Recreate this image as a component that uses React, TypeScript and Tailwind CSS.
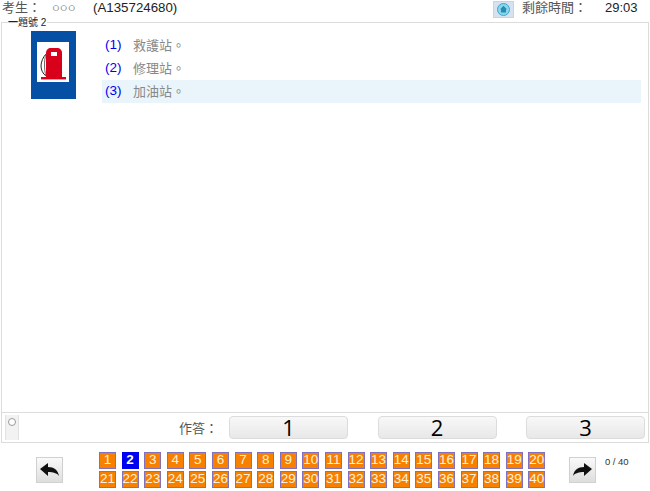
const options = [
  { no: "(1)", text: "救護站。" },
  { no: "(2)", text: "修理站。" },
  { no: "(3)", text: "加油站。" },
];

const cjk = "font-['Liberation_Sans','Noto_Sans_CJK_TC',sans-serif]";

function PumpSign() {
  return (
    <svg width="45" height="68" viewBox="0 0 45 68" className="block">
      <rect width="45" height="68" fill="#0550a5" />
      <rect x="6" y="11" width="32" height="40" fill="#fff" />
      <path d="M15 46V22c0-3 2-5 5-5h6c3 0 5 2 5 5v24z" fill="#d9001b" />
      <rect x="20" y="21" width="6" height="4" fill="#fff" />
      <rect x="10" y="46" width="25" height="2.4" fill="#d9001b" />
      <path d="M15 23c-3 3-5 8-5 12s2 8 5 10" fill="none" stroke="#222" strokeWidth="1" />
      <path d="M15 23c-2 6-2 16 0 22" fill="none" stroke="#666" strokeWidth="1" />
    </svg>
  );
}

function HomeButton() {
  return (
    <div className="w-[21px] h-[17px] mt-[1px] border border-[#c6d4e6] bg-[#d6e2f0] flex items-center justify-center">
      <svg width="13" height="13" viewBox="0 0 13 13">
        <circle cx="6.5" cy="6.5" r="6" fill="#8fd4ea" stroke="#3fa6c8" />
        <path d="M6.5 2.8 10 6.2H9v3.4H4V6.2H3z" fill="#1f8fb5" />
      </svg>
    </div>
  );
}

function ArrowButton({ flip }: { flip?: boolean }) {
  return (
    <div className="w-[27px] h-[26px] border border-[#d0d0d0] bg-gradient-to-b from-[#fafafa] to-[#dedede] flex items-center justify-center">
      <svg width="20" height="14" viewBox="0 0 20 14" className={flip ? "-scale-x-100" : ""}>
        <path d="M0 6 8 0v4c6 0 10 3 11 9-2-3-6-4-11-4v4z" fill="#111" />
      </svg>
    </div>
  );
}

function AnswerButton({ label }: { label: string }) {
  return (
    <div className="w-[119px] h-[23px] rounded-sm border border-[#dcdcdc] bg-gradient-to-b from-[#f8f8f8] to-[#e8e8e8] flex items-center justify-center text-[22px] text-black font-['Open_Sans',sans-serif]">
      {label}
    </div>
  );
}

export default function App() {
  const numbers = Array.from({ length: 40 }, (_, i) => i + 1);

  return (
    <div className={`w-[650px] h-[491px] bg-white overflow-hidden ${cjk}`}>
      {/* 考生資料 */}
      <div className="h-[22px] flex items-start text-[13px] leading-[15px] text-[#333]">
        <span className="w-[93px] flex pl-[2px] text-[#555]">
          <span className="w-[50px]">考生：</span>
          <span>○○○</span>
        </span>
        <span className="text-[13.3px] text-[#222]">(A135724680)</span>
        <div className="ml-auto flex items-start">
          <HomeButton />
          <span className="ml-[8px] w-[83px] text-[#555]">剩餘時間：</span>
          <span className="w-[45px] text-[#222]">29:03</span>
        </div>
      </div>

      {/* 題目區 */}
      <div className="relative mx-[1px] h-[421px] border border-[#dcdcdc] flex flex-col">
        <div className="absolute left-[6px] -top-[6px] bg-white pr-[1px] text-[10px] leading-[12px] text-[#222]">
          <span className="font-bold">一</span>題號 2
        </div>
        <div className="flex-1 flex pt-[8px] pl-[29px]">
          <PumpSign />
          <div className="ml-[26px] mr-[7px] flex-1 pt-[3px]">
            {options.map((o, i) => (
              <div
                key={o.no}
                className={`h-[23px] flex items-center pl-[3px] text-[13px] ${i === 2 ? "bg-[#e9f5fb]" : ""}`}
              >
                <span className="w-[28px] text-[13.5px] text-[#0000f0]">{o.no}</span>
                <span className="text-[#888]">{o.text}</span>
              </div>
            ))}
          </div>
        </div>
        <div className="h-[30px] border-t border-[#dcdcdc] flex items-center">
          <div className="ml-[3px] w-[14px] h-[25px] bg-[#f2f2f2] border-x border-[#e2e2e2] flex justify-center pt-[3px]">
            <div className="w-[8px] h-[8px] rounded-full border border-[#999] bg-white" />
          </div>
          <span className="ml-[160px] w-[50px] mt-[2px] text-[13px] text-[#555]">作答：</span>
          <div className="flex gap-[29.5px]">
            <AnswerButton label="1" />
            <AnswerButton label="2" />
            <AnswerButton label="3" />
          </div>
        </div>
      </div>

      {/* 題號列 */}
      <div className="flex items-start pt-[9px]">
        <div className="ml-[36px] mt-[5px]">
          <ArrowButton />
        </div>
        <div className="ml-[36px] grid grid-cols-[repeat(20,17px)] gap-x-[5.6px] gap-y-[2px]">
          {numbers.map((n) => (
            <div
              key={n}
              className={`h-[17px] flex items-center justify-center text-[13.5px] ${
                n === 2
                  ? "bg-[#0000f0] text-white font-bold"
                  : "bg-[#f78000] border border-[#8070c0] text-[#fff0dc]"
              }`}
            >
              {n}
            </div>
          ))}
        </div>
        <div className="ml-[23.6px] mt-[5px]">
          <ArrowButton flip />
        </div>
        <span className="ml-[9px] mt-[4px] text-[9.5px] leading-[12px] text-[#333]">0 / 40</span>
      </div>
    </div>
  );
}
